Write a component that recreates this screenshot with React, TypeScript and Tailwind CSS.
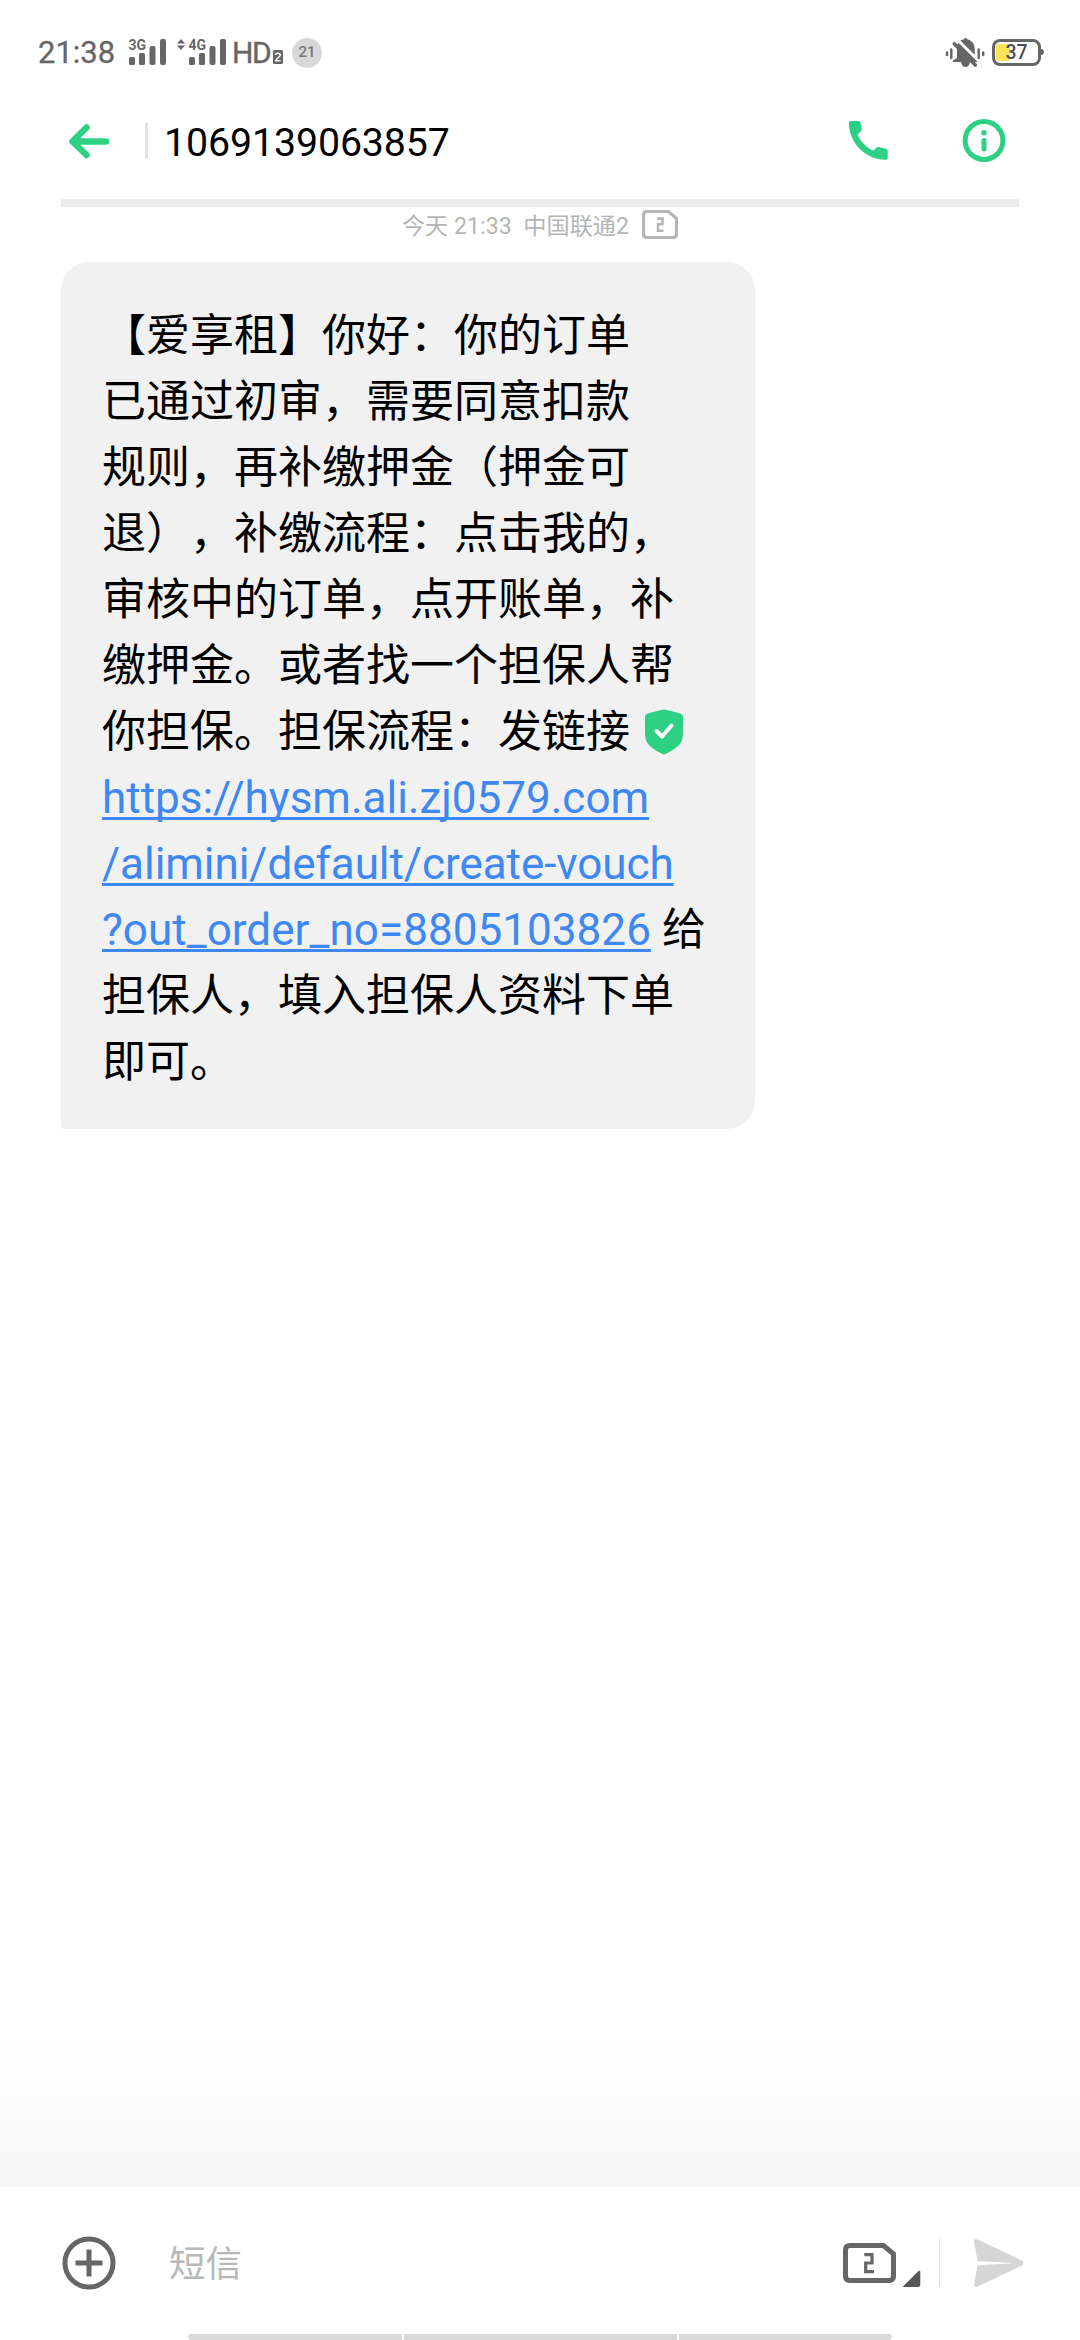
import React from "react";

const MESSAGE_BEFORE = [
  "【爱享租】你好：你的订单",
  "已通过初审，需要同意扣款",
  "规则，再补缴押金（押金可",
  "退），补缴流程：点击我的，",
  "审核中的订单，点开账单，补",
  "缴押金。或者找一个担保人帮",
];

function Signal({ label }: { label: string }) {
  return (
    <svg width="38" height="28" viewBox="0 0 38 28" fill="#666" className="overflow-visible">
      <rect x="0" y="18" width="6" height="8" rx="1.5" />
      <rect x="10" y="14" width="6" height="12" rx="1.5" />
      <rect x="20.5" y="7" width="6" height="19" rx="2" />
      <rect x="31" y="0" width="6" height="26" rx="2" />
      <text x="-0.5" y="10.8" fontSize="15" fontWeight="700" fontFamily="Roboto, sans-serif" textLength="17.5" lengthAdjust="spacingAndGlyphs">
        {label}
      </text>
    </svg>
  );
}

function MutedBell() {
  return (
    <svg width="40" height="30" viewBox="0 0 40 30" fill="#666">
      <path d="M12 20V10C12 4 16 1.800 18.500 1.500Q19 0 20.500 0T22.500 1.500C26 2 29.700 5 29.700 11v8l3 3.500V24H25q-1 5-4.500 5T16 24H8v-1.500Z" />
      <path d="M11 .300 34 23.300" stroke="#fff" strokeWidth="3" />
      <path d="M9.300 5.800 30.300 27" stroke="#666" strokeWidth="3.600" strokeLinecap="round" />
      <path d="M2 14.500v2.500M6.300 11.500v8.500M33.700 11.500v8.500M38.200 14.500v2.500" stroke="#666" strokeWidth="2.400" strokeLinecap="round" />
    </svg>
  );
}

function StatusBar() {
  return (
    <header className="flex h-[104px] items-center pt-px pl-[38px] pr-[39px] text-[#666]">
      <span className="w-[80px] text-[31px] leading-none [-webkit-text-stroke:0.3px_#666]">21:38</span>
      <div className="ml-[11px] flex">
        <Signal label="3G" />
      </div>
      <svg width="8" height="12" viewBox="0 0 8 12" fill="#666" className="mb-[16px] ml-[10px]">
        <path d="M4 0 8 4.500H0zM4 11 0 6.500h8z" />
      </svg>
      <div className="ml-[4px] flex">
        <Signal label="4G" />
      </div>
      <span className="ml-[5px] w-[41px] text-[30px] leading-none tracking-[-1.5px] [-webkit-text-stroke:0.4px_#666]">HD</span>
      <svg width="10" height="14" viewBox="0 0 10 14" className="mt-[9px]">
        <rect width="10" height="14" rx="1.5" fill="#666" />
        <path d="M2.500 5C2.500 2.500 7.300 2.500 7.300 5 7.200 7 3 8.500 2.700 10.800H7.600" fill="none" stroke="#fff" strokeWidth="1.500" />
      </svg>
      <span className="ml-[9px] flex size-[30px] items-center justify-center rounded-full bg-[#d8d8d8] text-[15px] font-medium text-[#777]">
        21
      </span>
      <div className="ml-auto flex items-center">
        <MutedBell />
        <div className="relative ml-[7px] flex h-[27px] w-[49px] items-center justify-center rounded-[8px] border-[3px] border-[#666]">
          <span className="absolute left-px top-[2px] h-[17px] w-[14px] rounded-[3px] bg-[#fce35c]" />
          <span className="relative text-[19.5px] font-medium leading-none text-[#4f4f4f]">37</span>
          <span className="absolute right-[-6px] top-[7px] h-[6px] w-[3px] rounded-r-full bg-[#666]" />
        </div>
      </div>
    </header>
  );
}

function TitleBar() {
  return (
    <div className="mx-[61px] flex h-[95px] items-start">
      <svg width="42" height="36" viewBox="0 0 42 36" fill="none" stroke="#2ed183" className="ml-[7px] mt-[19px]">
        <path d="M38 18.500H6M18.500 4.500 4.500 18.500l14 13.500" strokeWidth="6.500" strokeLinecap="round" strokeLinejoin="round" />
      </svg>
      <span className="ml-[35px] mt-[19px] h-[36px] w-[3px] bg-[#e3e3e3]" />
      <h1 className="ml-[16px] mt-[15px] text-[39.3px] leading-[48px] tracking-[-0.1px] text-black">1069139063857</h1>
      <svg width="40" height="40" viewBox="0 0 40 40" fill="#2ed183" className="ml-auto mt-[16px]">
        <path d="M3.200.900H10.500Q12 .900 12.600 2.700L13.800 8.500Q14 10 13 11.200L9.500 14.700C13 22 18.500 27.300 25.300 30.800L28.500 27.600Q29.600 26.700 31 27L38 28.700Q39.700 29.300 39.700 31V37.700Q39.700 39.700 37.500 39.700C17 39.500 1 22.500 1 3.200Q1 .900 3.200.900Z" />
      </svg>
      <svg width="44" height="44" viewBox="0 0 44 44" fill="none" className="ml-[74px] mr-[13px] mt-[15px]">
        <circle cx="22" cy="21.500" r="18.900" stroke="#2ed183" strokeWidth="5" />
        <circle cx="22" cy="13.800" r="2.700" fill="#2ed183" />
        <path d="M22 21.500v8.500" stroke="#2ed183" strokeWidth="5" strokeLinecap="round" />
      </svg>
    </div>
  );
}

function ShieldIcon() {
  return (
    <svg width="38" height="46" viewBox="0 0 38 46" className="ml-[15px] inline-block align-[-8px]">
      <path d="M17 .800Q19 0 21 .800L35.500 4.500Q38 5.300 38 8V25C38 36 30 40 21 44.800Q19 45.800 17 44.800C8 40 0 36 0 25V8Q0 5.300 2.500 4.500Z" fill="#2ed183" />
      <path d="m11.500 22 5.500 5.500L26.500 16.500" fill="none" stroke="#fff" strokeWidth="4" strokeLinecap="round" strokeLinejoin="round" />
    </svg>
  );
}

function SimIcon() {
  return (
    <svg width="36" height="29" viewBox="0 0 36 29" fill="none" stroke="#b5b5b5">
      <path d="M5 1.500H26.500L34.500 8.500V24Q34.500 27.500 31 27.500H5Q1.500 27.500 1.500 24V5Q1.500 1.500 5 1.500Z" strokeWidth="3.200" />
      <path d="M15 8.500h5.500v5.700H16V20.700h5.500" strokeWidth="2.500" />
    </svg>
  );
}

function Link({ children }: { children: string }) {
  return (
    <a className="text-[#3d88f2] underline decoration-[2.5px] underline-offset-[4px] [text-decoration-skip-ink:none]">
      {children}
    </a>
  );
}

function Bubble() {
  return (
    <article className="ml-[61px] mt-[20px] h-[867px] w-[694px] whitespace-nowrap rounded-[28px] rounded-bl-[4px] bg-[#f1f1f1] pl-[41px] pt-[41px] text-[44px] leading-[66px] text-black [text-spacing-trim:space-all]">
      {MESSAGE_BEFORE.map((line) => (
        <p key={line} className="h-[66px]">{line}</p>
      ))}
      <p className="h-[66px]">
        你担保。担保流程：发链接
        <ShieldIcon />
      </p>
      <p className="h-[66px]"><Link>https://hysm.ali.zj0579.com</Link></p>
      <p className="h-[66px] tracking-[-0.05px]"><Link>/alimini/default/create-vouch</Link></p>
      <p className="h-[66px] tracking-[0.05px]"><Link>?out_order_no=8805103826</Link> 给</p>
      <p className="h-[66px]">担保人，填入担保人资料下单</p>
      <p className="h-[66px]">即可。</p>
    </article>
  );
}

function Composer() {
  return (
    <footer className="flex h-[153px] flex-col bg-white">
      <div className="flex h-[147px] items-start">
        <svg width="54" height="54" viewBox="0 0 54 54" fill="none" stroke="#666" className="ml-[62px] mt-[49px]">
          <circle cx="27" cy="27" r="24" strokeWidth="5" />
          <path d="M27 13.500v27M13.500 27h27" strokeWidth="5" />
        </svg>
        <span className="ml-[53px] mt-[51px] text-[36.5px] leading-[54px] text-[#b8b8b8]">短信</span>
        <svg width="80" height="48" viewBox="0 0 80 48" className="ml-auto mt-[54px]">
          <path d="M7 4.500H40.500L50.500 13V35Q50.500 39.500 46 39.500H7Q2.500 39.500 2.500 35V9Q2.500 4.500 7 4.500Z" fill="none" stroke="#666" strokeWidth="5" />
          <path d="M21.300 13.700h7.700v8.300H22.700V30.700H31" fill="none" stroke="#666" strokeWidth="3.200" />
          <path d="M60.500 45 75.500 30Q77.300 29 77.300 31V43.500Q77.300 46 75 46H61.500Q59 46 60.500 45Z" fill="#575757" />
        </svg>
        <span className="ml-[16px] mt-[52px] h-[48px] w-px bg-[#dedede]" />
        <svg width="52" height="50" viewBox="0 0 52 50" fill="#d6d6d6" className="ml-[33px] mr-[55px] mt-[51px]">
          <path d="M1 3.500Q1 0 4.500 1.500L49 22.500Q51.500 25 49 27.500L4.500 48.500Q1 50 1 46.500L4.500 27.200 38 25.500V24.700L4.500 23.200Z" />
        </svg>
      </div>
      <div className="flex gap-[2px] px-[188px]">
        <span className="h-[6px] w-[214px] rounded-l-full bg-[#d8d8d8]" />
        <span className="h-[6px] flex-1 bg-[#d8d8d8]" />
        <span className="h-[6px] w-[213px] rounded-r-full bg-[#d8d8d8]" />
      </div>
    </footer>
  );
}

export default function App() {
  return (
    <main lang="zh-CN" className="flex h-[2340px] w-[1080px] flex-col overflow-hidden bg-white font-['Roboto','Noto_Sans_CJK_SC',sans-serif]">
      <StatusBar />
      <TitleBar />
      <div className="mx-[61px] h-[8px] bg-[#ececec]" />
      <div className="flex h-[35px] items-center justify-center text-[23.2px] text-[#b5b5b5]">
        <span className="whitespace-pre pt-[3px]">今天 21:33  中国联通2</span>
        <span className="ml-[13px] flex"><SimIcon /></span>
      </div>
      <Bubble />
      <div className="mt-auto h-[150px] bg-gradient-to-b from-white to-[#f7f7f7]" />
      <Composer />
    </main>
  );
}
